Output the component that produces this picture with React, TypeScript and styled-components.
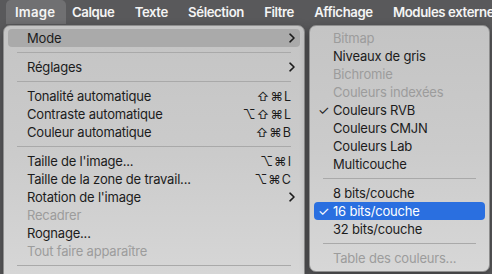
import React from 'react';
import styled, { createGlobalStyle } from 'styled-components';

const GlobalStyle = createGlobalStyle`
  html, body {
    margin: 0;
    padding: 0;
    background: #5a5a5c;
    overflow: hidden;
  }
  body {
    font-family: Inter, "Liberation Sans", sans-serif;
  }
`;

type Entry =
  | { kind: 'sep' }
  | {
      kind?: 'item';
      label: string;
      shortcut?: string;
      sub?: boolean;
      disabled?: boolean;
      checked?: boolean;
      hover?: boolean;
      active?: boolean;
    };

const mainItems: Entry[] = [
  { label: 'Mode', sub: true, hover: true },
  { kind: 'sep' },
  { label: 'Réglages', sub: true },
  { kind: 'sep' },
  { label: 'Tonalité automatique', shortcut: '⇧⌘L' },
  { label: 'Contraste automatique', shortcut: '⌥⇧⌘L' },
  { label: 'Couleur automatique', shortcut: '⇧⌘B' },
  { kind: 'sep' },
  { label: "Taille de l'image...", shortcut: '⌥⌘I' },
  { label: 'Taille de la zone de travail...', shortcut: '⌥⌘C' },
  { label: "Rotation de l'image", sub: true },
  { label: 'Recadrer', disabled: true },
  { label: 'Rognage...' },
  { label: 'Tout faire apparaître', disabled: true },
  { kind: 'sep' },
];

const modeItems: Entry[] = [
  { label: 'Bitmap', disabled: true },
  { label: 'Niveaux de gris' },
  { label: 'Bichromie', disabled: true },
  { label: 'Couleurs indexées', disabled: true },
  { label: 'Couleurs RVB', checked: true },
  { label: 'Couleurs CMJN' },
  { label: 'Couleurs Lab' },
  { label: 'Multicouche' },
  { kind: 'sep' },
  { label: '8 bits/couche' },
  { label: '16 bits/couche', checked: true, active: true },
  { label: '32 bits/couche' },
  { kind: 'sep' },
  { label: 'Table des couleurs...', disabled: true },
];

const barItems = ['Image', 'Calque', 'Texte', 'Sélection', 'Filtre', 'Affichage', 'Modules externes'];

const MenuBar = styled.div`
  height: 24px;
  background: #59595b;
  display: flex;
  align-items: stretch;
  padding-left: 6px;
  white-space: nowrap;
  overflow: hidden;
`;

const BarItem = styled.div<{ $open?: boolean }>`
  padding: 0 10.1px;
  display: flex;
  align-items: center;
  flex: none;
  font-size: 13.2px;
  font-weight: 600;
  letter-spacing: -0.4px;
  color: #f4f4f4;
  background: ${p => (p.$open ? '#707072' : 'transparent')};
  border-radius: 5px 5px 0 0;
  ${p =>
    p.$open &&
    `
    width: 60px;
    box-sizing: border-box;
    padding: 0 0 0 9px;
    letter-spacing: 0.2px;
    margin-right: -4.1px;
  `}
`;

const Stage = styled.div`
  display: flex;
  align-items: flex-start;
  padding-left: 3px;
  gap: 4px;
  margin-top: 1px;
`;

const Menu = styled.div<{ $width: number; $sub?: boolean }>`
  width: ${p => p.$width}px;
  box-sizing: border-box;
  background: linear-gradient(180deg, #c4c4c4 0%, #cbcbcb 50%, #d7d7d7 100%);
  border: 1px solid #8e8e8e;
  border-radius: ${p => (p.$sub ? '7px' : '7px 7px 0 0')};
  padding: 3px 4px ${p => (p.$sub ? '4px' : '12px')};
  box-shadow: 0 3px 10px rgba(0, 0, 0, 0.35);
`;

const Row = styled.div<{ $hover?: boolean; $active?: boolean; $disabled?: boolean }>`
  height: 18px;
  display: flex;
  align-items: center;
  padding: 0 6px 0 4px;
  border-radius: 4px;
  font-size: 13px;
  letter-spacing: -0.2px;
  color: ${p => (p.$active ? '#ffffff' : p.$disabled ? '#9c9c9c' : '#1c1c1c')};
  background: ${p => (p.$active ? '#2a6fe0' : p.$hover ? '#aaaaaa' : 'transparent')};
  white-space: nowrap;
`;

const Check = styled.span`
  width: 15px;
  flex: none;
  font-size: 13px;
`;

const Label = styled.span`
  flex: 1;
`;

const Shortcut = styled.span`
  font-size: 12.5px;
  letter-spacing: 1px;
  margin-right: 2px;
`;

const Separator = styled.div`
  height: 1px;
  background: #a9a9a9;
  margin: 5px 9px;
`;

const Chevron = () => (
  <svg width="8" height="10" viewBox="0 0 8 10" style={{ marginRight: -2 }}>
    <path d="M2 1.2 L6 5 L2 8.8" fill="none" stroke="#1c1c1c" strokeWidth="1.6" strokeLinecap="round" strokeLinejoin="round" />
  </svg>
);

const MenuList: React.FC<{ items: Entry[]; width: number; sub?: boolean }> = ({ items, width, sub }) => (
  <Menu $width={width} $sub={sub}>
    {items.map((it, i) =>
      it.kind === 'sep' ? (
        <Separator key={i} />
      ) : (
        <Row key={i} $hover={it.hover} $active={it.active} $disabled={it.disabled}>
          <Check>{it.checked ? '✓' : ''}</Check>
          <Label>{it.label}</Label>
          {it.shortcut && <Shortcut>{it.shortcut}</Shortcut>}
          {it.sub && <Chevron />}
        </Row>
      )
    )}
  </Menu>
);

export default function App() {
  return (
    <>
      <GlobalStyle />
      <MenuBar>
        {barItems.map((b, i) => (
          <BarItem key={b} $open={i === 0}>
            {b}
          </BarItem>
        ))}
      </MenuBar>
      <Stage>
        <MenuList items={mainItems} width={302} />
        <MenuList items={modeItems} width={181} sub />
      </Stage>
    </>
  );
}
